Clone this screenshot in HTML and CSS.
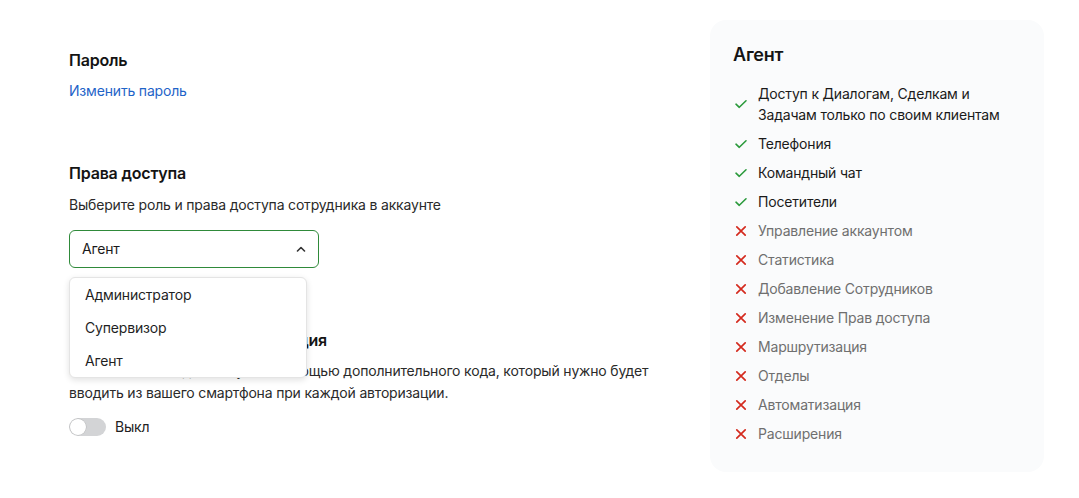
FILE: index.html
```html
<!DOCTYPE html>
<html lang="ru">
<head>
<meta charset="utf-8">
<link rel="stylesheet" href="styles.css">
</head>
<body>
<div class="page">
  <div class="left">
    <section class="sec">
      <h2 class="h">Пароль</h2>
      <a class="link" href="#">Изменить пароль</a>
    </section>
    <section class="sec sec-access">
      <h2 class="h">Права доступа</h2>
      <p class="desc">Выберите роль и права доступа сотрудника в аккаунте</p>
      <div class="select-wrap">
        <div class="select">
          <span>Агент</span>
          <svg class="chev" width="10" height="6" viewBox="0 0 10 6"><path d="M1.5 5 L5 1.5 L8.5 5" fill="none" stroke="#333" stroke-width="1.6" stroke-linecap="round" stroke-linejoin="round"/></svg>
        </div>
        <ul class="menu">
          <li>Администратор</li>
          <li>Супервизор</li>
          <li>Агент</li>
        </ul>
      </div>
    </section>
    <section class="sec sec-2fa">
      <h2 class="h">Двухфакторная аутентификация</h2>
      <p class="desc desc-wide">Обезопасьте вход в аккаунт с помощью дополнительного кода, который нужно будет вводить из вашего смартфона при каждой авторизации.</p>
      <div class="toggle-row">
        <span class="toggle"><span class="knob"></span></span>
        <span class="toggle-label">Выкл</span>
      </div>
    </section>
  </div>
  <aside class="card">
    <h3 class="card-title">Агент</h3>
    <ul class="perms">
      <li class="on"><svg class="ic" viewBox="0 0 14 14"><path d="M2 7.2 L5.3 10.3 L12 3.8" fill="none" stroke="#2b9a3c" stroke-width="1.6" stroke-linecap="round" stroke-linejoin="round"/></svg><span>Доступ к Диалогам, Сделкам и Задачам только по своим клиентам</span></li>
      <li class="on"><svg class="ic" viewBox="0 0 14 14"><path d="M2 7.2 L5.3 10.3 L12 3.8" fill="none" stroke="#2b9a3c" stroke-width="1.6" stroke-linecap="round" stroke-linejoin="round"/></svg><span>Телефония</span></li>
      <li class="on"><svg class="ic" viewBox="0 0 14 14"><path d="M2 7.2 L5.3 10.3 L12 3.8" fill="none" stroke="#2b9a3c" stroke-width="1.6" stroke-linecap="round" stroke-linejoin="round"/></svg><span>Командный чат</span></li>
      <li class="on"><svg class="ic" viewBox="0 0 14 14"><path d="M2 7.2 L5.3 10.3 L12 3.8" fill="none" stroke="#2b9a3c" stroke-width="1.6" stroke-linecap="round" stroke-linejoin="round"/></svg><span>Посетители</span></li>
      <li class="off"><svg class="ic" viewBox="0 0 14 14"><path d="M2.8 2.8 L11.2 11.2 M11.2 2.8 L2.8 11.2" fill="none" stroke="#d42a1e" stroke-width="1.7" stroke-linecap="round"/></svg><span>Управление аккаунтом</span></li>
      <li class="off"><svg class="ic" viewBox="0 0 14 14"><path d="M2.8 2.8 L11.2 11.2 M11.2 2.8 L2.8 11.2" fill="none" stroke="#d42a1e" stroke-width="1.7" stroke-linecap="round"/></svg><span>Статистика</span></li>
      <li class="off"><svg class="ic" viewBox="0 0 14 14"><path d="M2.8 2.8 L11.2 11.2 M11.2 2.8 L2.8 11.2" fill="none" stroke="#d42a1e" stroke-width="1.7" stroke-linecap="round"/></svg><span>Добавление Сотрудников</span></li>
      <li class="off"><svg class="ic" viewBox="0 0 14 14"><path d="M2.8 2.8 L11.2 11.2 M11.2 2.8 L2.8 11.2" fill="none" stroke="#d42a1e" stroke-width="1.7" stroke-linecap="round"/></svg><span>Изменение Прав доступа</span></li>
      <li class="off"><svg class="ic" viewBox="0 0 14 14"><path d="M2.8 2.8 L11.2 11.2 M11.2 2.8 L2.8 11.2" fill="none" stroke="#d42a1e" stroke-width="1.7" stroke-linecap="round"/></svg><span>Маршрутизация</span></li>
      <li class="off"><svg class="ic" viewBox="0 0 14 14"><path d="M2.8 2.8 L11.2 11.2 M11.2 2.8 L2.8 11.2" fill="none" stroke="#d42a1e" stroke-width="1.7" stroke-linecap="round"/></svg><span>Отделы</span></li>
      <li class="off"><svg class="ic" viewBox="0 0 14 14"><path d="M2.8 2.8 L11.2 11.2 M11.2 2.8 L2.8 11.2" fill="none" stroke="#d42a1e" stroke-width="1.7" stroke-linecap="round"/></svg><span>Автоматизация</span></li>
      <li class="off"><svg class="ic" viewBox="0 0 14 14"><path d="M2.8 2.8 L11.2 11.2 M11.2 2.8 L2.8 11.2" fill="none" stroke="#d42a1e" stroke-width="1.7" stroke-linecap="round"/></svg><span>Расширения</span></li>
    </ul>
  </aside>
</div>
</body>
</html>
```

FILE: styles.css
```css
* { box-sizing: border-box; }
html, body { margin: 0; padding: 0; background: #fff; }
body {
  font-family: Inter, "Noto Sans", "Liberation Sans", sans-serif;
  color: #1a1a1a;
  font-size: 14px;
  line-height: 20px;
  letter-spacing: -0.18px;
}
.page {
  display: flex;
  align-items: flex-start;
  padding: 20px 0 0 69px;
  gap: 41px;
}
.left {
  width: 600px;
  padding-top: 28px;
}
.sec { margin: 0; }
.sec-access { margin-top: 60px; }
.sec-2fa { margin-top: 60px; }
.h {
  margin: 0;
  font-size: 16px;
  line-height: 24px;
  font-weight: 600;
  color: #141414;
  letter-spacing: -0.2px;
}
.link {
  display: block;
  margin-top: 9px;
  color: #1f64c8;
  text-decoration: none;
  font-size: 14px;
  line-height: 20px;
}
.desc {
  margin: 10px 0 0;
  color: #2a2a2a;
}
.desc-wide {
  margin-top: 8px;
  line-height: 22px;
}
.select-wrap {
  position: relative;
  margin-top: 15px;
  width: 250px;
}
.select {
  height: 38px;
  border: 1px solid #2f8a3a;
  border-radius: 6px;
  display: flex;
  align-items: center;
  justify-content: space-between;
  padding: 0 12px 0 12px;
  color: #1a1a1a;
  background: #fff;
}
.menu {
  position: absolute;
  top: 47px;
  left: 0;
  width: 238px;
  margin: 0;
  padding: 0;
  list-style: none;
  background: #fff;
  border-radius: 6px;
  border: 1px solid #e4e4e4;
  box-shadow: 0 2px 6px rgba(0,0,0,0.12);
  z-index: 5;
}
.menu li {
  height: 33px;
  line-height: 33px;
  padding-left: 15px;
  color: #1f1f1f;
}
.toggle-row {
  margin-top: 13px;
  display: flex;
  align-items: center;
  gap: 9px;
  height: 20px;
}
.toggle {
  width: 37px;
  height: 18px;
  border-radius: 9px;
  background: #d3d4d6;
  position: relative;
  display: inline-block;
}
.knob {
  position: absolute;
  left: 1px;
  top: 1px;
  width: 16px;
  height: 16px;
  border-radius: 50%;
  background: #fff;
  box-shadow: 0 0 0 0.5px rgba(0,0,0,0.15);
}
.toggle-label { color: #222; }
.card {
  width: 334px;
  background: #fafbfc;
  border-radius: 16px;
  padding: 23px 23px 28px 23px;
}
.card-title {
  margin: 0;
  font-size: 18px;
  line-height: 24px;
  font-weight: 600;
  color: #141414;
  letter-spacing: -0.2px;
}
.perms {
  list-style: none;
  margin: 16px 0 0;
  padding: 0;
  display: flex;
  flex-direction: column;
  gap: 8px;
}
.perms li {
  display: flex;
  align-items: center;
  gap: 10px;
  line-height: 21px;
  font-size: 14px;
}
.ic {
  width: 14px;
  height: 14px;
  flex: none;
  margin-left: 1px;
}
.perms li.on { color: #1a1a1a; }
.perms li.off { color: #6f6f6f; }
.perms li span { flex: 1; }
```
